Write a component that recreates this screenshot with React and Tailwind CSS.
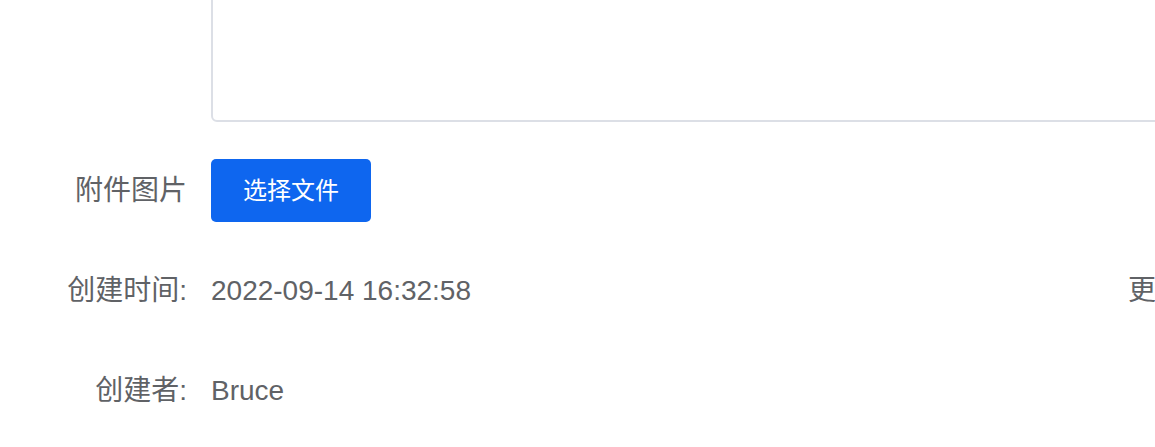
import React from 'react';

const font = { fontFamily: '"Liberation Sans", Arial, "Noto Sans CJK SC", sans-serif' };

function Label({ children }) {
  return (
    <div className="w-[187px] shrink-0 text-right">{children}</div>
  );
}

export default function App() {
  return (
    <div
      className="w-[1155px] h-[447px] overflow-hidden bg-white text-[28px] leading-[64px] text-[#606266]"
      style={font}
    >
      {/* Description textarea (top cut off) */}
      <div className="flex gap-6 mt-[-78px]">
        <Label />
        <div className="h-[200px] w-[1100px] shrink-0 rounded-[6px] border-2 border-[#dcdfe6]" />
      </div>

      {/* Attachment */}
      <div className="flex gap-6 mt-[37px] items-start h-[64px]">
        <div className="w-[187px] shrink-0 text-right leading-[63px]">附件图片</div>
        <button className="h-[63px] px-8 rounded-[5px] bg-[#0e66ef] text-white text-[24px] leading-none">
          选择文件
        </button>
      </div>

      {/* Created time / updated time */}
      <div className="flex mt-[36px] h-[64px]">
        <div className="flex gap-6 w-[1128px] shrink-0">
          <Label>创建时间:</Label>
          <div>2022-09-14 16:32:58</div>
        </div>
        <div className="whitespace-nowrap">更新时间:</div>
      </div>

      {/* Creator */}
      <div className="flex gap-6 mt-[36px]">
        <Label>创建者:</Label>
        <div>Bruce</div>
      </div>
    </div>
  );
}
